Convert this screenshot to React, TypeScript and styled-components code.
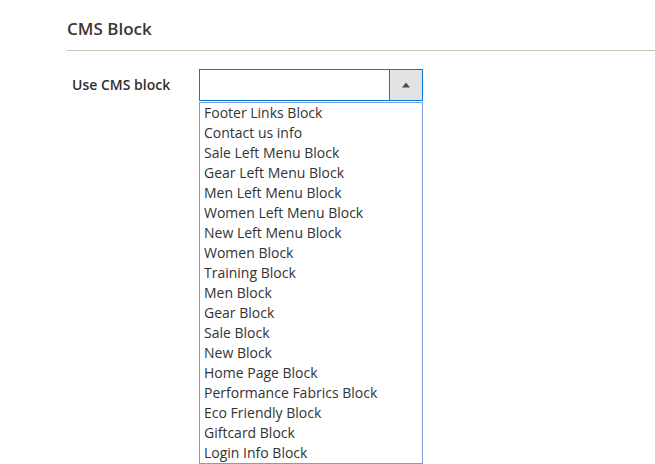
import React from "react";
import styled, { createGlobalStyle } from "styled-components";

const GlobalStyle = createGlobalStyle`
  html, body { margin: 0; padding: 0; background: #ffffff; }
  body { font-family: "Open Sans", "Noto Sans", sans-serif; }
  * { box-sizing: border-box; }
`;

const Page = styled.div`
  padding: 17px 0 0 67px;
  width: 655px;
  height: 464px;
  overflow: hidden;
`;

const Legend = styled.div`
  font-size: 17px;
  line-height: 23px;
  font-weight: 600;
  color: #41362f;
  padding-bottom: 10px;
  border-bottom: 1px solid #cac3b4;
`;

const Row = styled.div`
  display: flex;
  align-items: flex-start;
  margin-top: 18px;
  padding-left: 5px;
`;

const Label = styled.div`
  width: 127px;
  font-size: 14px;
  font-weight: 600;
  line-height: 32px;
  color: #303030;
`;

const Control = styled.div`
  display: flex;
  flex-direction: column;
  width: 224px;
`;

const SelectBox = styled.div`
  display: flex;
  height: 32px;
  border: 1px solid #007bdb;
  background: #ffffff;
`;

const SelectValue = styled.div`
  flex: 1;
`;

const ArrowButton = styled.div`
  width: 33px;
  border-left: 1px solid #007bdb;
  background: #e3e3e3;
  display: flex;
  align-items: center;
  justify-content: center;
`;

const ListBox = styled.ul`
  list-style: none;
  margin: 1px 0 0 0;
  padding: 0;
  border: 1px solid #7b9bd9;
  background: #ffffff;
`;

const Option = styled.li`
  height: 20px;
  line-height: 20px;
  padding-left: 4px;
  font-size: 14px;
  color: #333333;
  white-space: nowrap;
`;

const options = [
  "Footer Links Block",
  "Contact us info",
  "Sale Left Menu Block",
  "Gear Left Menu Block",
  "Men Left Menu Block",
  "Women Left Menu Block",
  "New Left Menu Block",
  "Women Block",
  "Training Block",
  "Men Block",
  "Gear Block",
  "Sale Block",
  "New Block",
  "Home Page Block",
  "Performance Fabrics Block",
  "Eco Friendly Block",
  "Giftcard Block",
  "Login Info Block",
];

export default function App() {
  return (
    <>
      <GlobalStyle />
      <Page>
        <Legend>CMS Block</Legend>
        <Row>
          <Label>Use CMS block</Label>
          <Control>
            <SelectBox>
              <SelectValue />
              <ArrowButton>
                <svg width="10" height="6" viewBox="0 0 10 6">
                  <path d="M1 5.5 L5 0.5 L9 5.5 Z" fill="#514943" />
                </svg>
              </ArrowButton>
            </SelectBox>
            <ListBox>
              {options.map((o) => (
                <Option key={o}>{o}</Option>
              ))}
            </ListBox>
          </Control>
        </Row>
      </Page>
    </>
  );
}
